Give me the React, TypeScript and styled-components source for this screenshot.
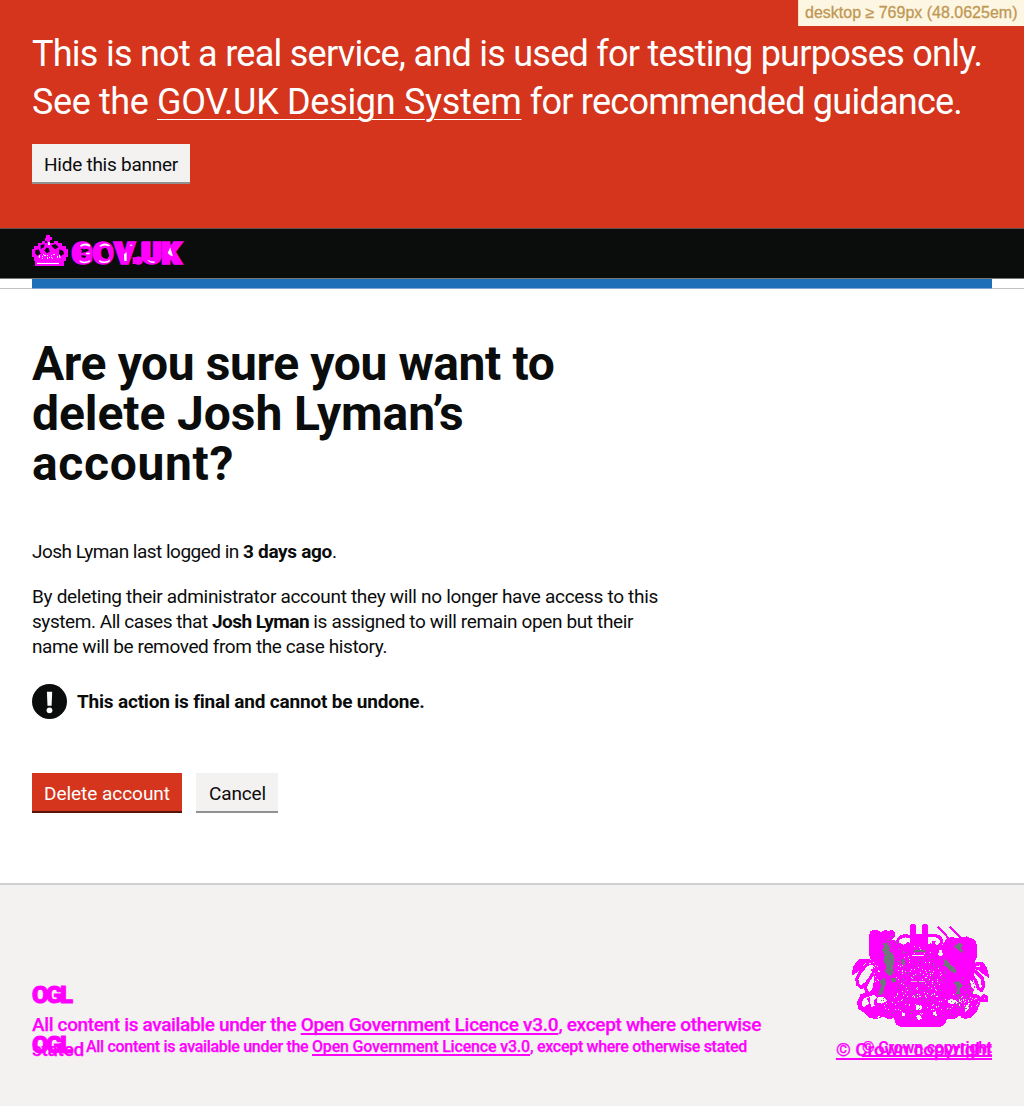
import React from "react";
import styled, { createGlobalStyle } from "styled-components";

const INK = "#0b0c0c";
const RED = "#d4351c";
const PALE = "#f3f2f1";
const MARK = "#ff00ff";
const SANS = 'Roboto, "Liberation Sans", Arial, sans-serif';

const GlobalStyle = createGlobalStyle`
  *, *::before, *::after { box-sizing: border-box; }
  body { margin: 0; background: ${PALE}; color: ${INK}; font: 19px/25px ${SANS}; }
  h1, p { margin: 0; }
`;

const Page = styled.div`
  display: flex;
  flex-direction: column;
  min-height: 1106px;
`;

const Run = styled.span<{ $track: number }>`
  letter-spacing: ${(p) => p.$track}px;
  white-space: pre;
`;

const Line = styled(Run)`
  display: block;
`;

const Strong = styled(Run)`
  font-weight: 700;
`;

const Banner = styled.div`
  height: 228px;
  padding: 30px 32px 0;
  background: ${RED};
  color: #fff;
`;

const BannerText = styled.p`
  margin-bottom: 18px;
  font-size: 36px;
  line-height: 48px;
  white-space: nowrap;
`;

const BannerLink = styled.a<{ $track: number }>`
  color: inherit;
  letter-spacing: ${(p) => p.$track}px;
  text-decoration: underline;
  text-decoration-thickness: 1px;
  text-underline-offset: 5px;
`;

const Breakpoint = styled.div`
  position: absolute;
  top: 0;
  right: 0;
  width: 226px;
  height: 26px;
  padding-left: 6px;
  border-left: 1px solid #f4e3c0;
  background: #fdf6e3;
  color: #c09853;
  font: 16px/25px "Liberation Sans", Arial, sans-serif;
  white-space: nowrap;
  -webkit-text-stroke: 0.3px #c09853;
`;

const tones = {
  grey: { bg: PALE, fg: INK, shadow: "#929191" },
  red: { bg: RED, fg: "#fff", shadow: "#55150b" },
};

const Button = styled.button<{ $tone: "grey" | "red"; $width: number; $track: number; $inset?: number }>`
  width: ${(p) => p.$width}px;
  height: 40px;
  padding: 2px 0 0 ${(p) => p.$inset ?? 12}px;
  border: 0;
  border-bottom: 2px solid ${(p) => tones[p.$tone].shadow};
  background: ${(p) => tones[p.$tone].bg};
  color: ${(p) => tones[p.$tone].fg};
  font: 19px/19px ${SANS};
  letter-spacing: ${(p) => p.$track}px;
  text-align: left;
  white-space: nowrap;
  display: block;
`;

const Header = styled.header`
  height: 51px;
  padding: 4px 32px 0;
  border-top: 1px solid #60514e;
  border-bottom: 1px solid #777;
  background: ${INK};
  svg { display: block; }
`;

const BlueStrip = styled.div`
  height: 10px;
  padding: 0 32px;
  border-bottom: 1px solid #c3c3c3;
  background: #fff;
  &::before {
    content: "";
    display: block;
    height: 9px;
    background: #1d70b8;
    box-shadow: 0 1px #79a5cf;
  }
`;

const Main = styled.main`
  height: 594px;
  padding: 50px 32px 0;
  background: #fff;
`;

const Title = styled.h1`
  margin-bottom: 50px;
  font-size: 48px;
  line-height: 50px;
`;

const Paragraph = styled.p`
  margin-bottom: 20px;
`;

const Warning = styled.div`
  display: flex;
  align-items: center;
  gap: 10px;
  height: 36px;
  margin: 24px 0 54px;
`;

const Actions = styled.div`
  display: flex;
  gap: 14px;
`;

const Footer = styled.footer`
  flex: 1;
  display: flex;
  justify-content: space-between;
  align-items: flex-start;
  padding: 39px 32px 0;
  border-top: 2px solid #cfcfcf;
  color: ${MARK};
  font-weight: 500;
  -webkit-text-stroke: 0.25px ${MARK};
`;

const Licence = styled.div`
  display: grid;
  width: 740px;
  padding-top: 57px;
  > * { grid-area: 1 / 1; }
`;

const Ogl = styled.span`
  font-size: 24px;
  line-height: 28px;
  font-weight: 900;
  letter-spacing: -2.5px;
  width: 54px;
  -webkit-text-stroke: 1px ${MARK};
`;

const LargeLicence = styled.div`
  display: flex;
  flex-direction: column;
  gap: 3px;
`;

const SmallLicence = styled.div`
  display: flex;
  align-items: flex-start;
  margin-top: 50px;
  font-size: 16px;
  line-height: 20px;
`;

const SmallText = styled.div`
  padding-top: 6px;
`;

const FooterLink = styled.a<{ $track: number; $drop?: number }>`
  color: inherit;
  letter-spacing: ${(p) => p.$track}px;
  text-decoration: underline;
  text-decoration-thickness: 2px;
  text-decoration-skip-ink: none;
  text-underline-offset: ${(p) => p.$drop ?? 2}px;
  white-space: pre;
`;

const Crest = styled.div`
  display: flex;
  flex-direction: column;
  align-items: flex-end;
  width: 160px;
  > svg { display: block; margin-right: 2px; }
`;

const Copyright = styled.div`
  display: grid;
  justify-items: end;
  margin-top: 9px;
  > * { grid-area: 1 / 1; }
`;

const SmallCopyright = styled(FooterLink)`
  padding-top: 1px;
  font-size: 16px;
  line-height: 20px;
`;

const specks = (n: number, cx: number, cy: number, rx: number, ry: number, seed: number) => {
  let s = seed;
  const next = () => {
    s = (s * 16807) % 2147483647;
    return s / 2147483647;
  };
  return Array.from({ length: n }, () => {
    const a = next() * Math.PI * 2;
    const r = Math.sqrt(next());
    const x = Math.round((cx + Math.cos(a) * r * rx) / 3) * 3;
    const y = Math.round((cy + Math.sin(a) * r * ry) / 3) * 3;
    return `M${x} ${y}h3v3h-3z`;
  }).join("");
};

const Logo = () => (
  <svg width="160" height="44" viewBox="96 39 480 132" aria-label="GOV.UK">
    <g fill={MARK} shapeRendering="crispEdges">
      <path d="M138 45h12v7h6v9h-6v7h12v-5h12v6h13v8h10v9h7v24h-6v12h-6v15H106v-15h-5v-12h-5V86h6v-9h11v-8h14v-6h9v6h6v-7h-8v-9h4z" />
    </g>
    <g fill={INK}>
      <path d="M122 75l12-2-2 9-10 5zM154 76l12-4 10 9-10 7-8-6zM106 91l10-3 6 13-10 6-7-7zM178 88l12 5 2 8-9 7-6-7zM133 92l6-9 7 1 3 11-8 5z" />
    </g>
    <path d={specks(22, 150, 108, 38, 7, 71)} fill="#eee" />
    <path d="M111 128h66v4h-66zM144 67h6v8h-6zM116 109h4v4h-4zM177 110h5v3h-5z" fill="#fff" />
    <path d="M117 126h60v2h-60z" fill={MARK} />
    <text
      x="217 280 346 402 427 486"
      y="129"
      fontFamily={SANS}
      fontSize="85"
      fontWeight="900"
      fill={MARK}
      stroke={MARK}
      strokeWidth="11"
    >
      GOV.UK
    </text>
    <path d="M398 112h26v20h-26zM424 66h18v56h-18z" fill={MARK} />
    <g fill="#fff">
      <path d="M240 76q15-10 31-1l-3 5q-15-7-25 1zM239 121q15 9 32-1l-2 6q-17 7-30 0zM298 78q16-14 33-1l-5 2q-12-6-24 1zM298 120q18 10 32-2l-2 8q-17 6-30 0zM372 103l8-7v27h-7zM503 99l8-17 4 15 4 12-9-3zM443 120q10 5 23 5l-4 4q-12 0-19-7zM258 98h11v5h-11zM390 74h7v3h-7z" />
    </g>
    <path d="M308 88q7-8 14 0l6 20-7 9-11-3-5-14zM246 91l13-5 9 4-10 6-14 3zM243 106l16 1-4 7-9-2z" fill={INK} />
  </svg>
);

const Alert = () => (
  <svg width="35" height="35" viewBox="0 0 35 35" aria-label="Warning">
    <circle cx="17.5" cy="17.5" r="17.5" fill={INK} />
    <path d="M14.9 7.7h5.3l-.6 14h-4.1z" fill="#fff" />
    <circle cx="17.5" cy="26.3" r="2.9" fill="#fff" />
  </svg>
);

const CoatOfArms = () => (
  <svg width="138" height="104" viewBox="66 40 414 312" shapeRendering="crispEdges" aria-label="Coat of arms">
    <g fill={MARK}>
      <path d="M116 76l5-14 11-5 13 3 8 5 11-7 12 3 10-4 10 8-2 14-8 8 15 4 20 12 12-9 7 2V45l5-4h8l5 5v24h18V45l5-4h8l6 4v55l8-3 12 14 22-8 11-17 16-8 14 4 20-3 12-2 24 10 8 17v31l-8 20 2 25-8 26 7 26-7 16 22 7 1 20-10 28-16 17-20 5-20-7-14 7-20-1-5 14-14 11-14 1H217l-18-8-8-19-17 2-14-7-22 8-19-5-17-14 2-20 19-9 6-17-13-10 12-20 5-28-9-22 2-25-8-21z" />
    </g>
    <g fill="none" stroke={MARK} strokeWidth="10">
      <path d="M134 157l-22-8-25 15 2 10-18 12 3-16 13-18 13-3 19 2M145 180l-32-21-21 23-12 23 4 17 10 8 15-12 16-24 22-19M116 210l-11 18 7 19" />
      <path d="M126 248l-29 8-8 18 1 15 14 10 14-7 8-16-11-15" strokeWidth="14" />
      <path d="M203 92l7-12 16-5 20 4M286 75l28-1 16 6 5 12-4 12-13 5-8-10 2-8" />
      <path d="M398 160l16-3 7 18 19 11 18 18 2 24-6 11-9-6-9-25-18-22M430 176l7-15 17-3 12 14 5 20-13-8-8-11-12 2M414 255l24 0 9 17-9 19-12 15-16 9M436 270l20-2 12 2 1-10-6-4-6 6 3 12" />
    </g>
    <path d="M323 49l26 26 9 16M359 49l34 34" fill="none" stroke={MARK} strokeWidth="6" />
    <path d="M75 180l12-21 13-5 4 6-12 14zM448 159l14 3 10 16 2 13-14-4-10-14z" fill={MARK} />
    <g fill={PALE}>
      <path d="M207 91l6-7 11-3 7 5v9l-9-1-6 5zM300 84h8l-3 8-6 4zM112 167l12-5 10 5-12 10-18 10zM326 119h9l4 12-6 7-8-5zM121 257l12-5 7 9-8 10 2 14-9 4-5-15zM403 291l16-13-4 19-9 8zM258 284h15l3 8-6 6h-12zM257 316l13-4 6 12-11 5zM143 259l18 1 12 10-18 9-14-3zM353 268l15-3 13 8-15 8-11-5zM217 305l9 3-3 9-7 1zM308 304l9-2 5 13-10 3zM420 207l10 10 4 18-8-2-6-16zM144 314l8 5-10 3zM384 314l9 4-10 3z" />
      <path d={specks(80, 266, 185, 70, 84, 17)} />
      <path d={specks(75, 270, 270, 125, 40, 37)} />
      <path d={specks(40, 410, 270, 35, 20, 61)} />
      <path d={specks(20, 130, 185, 20, 40, 99)} />
      <path d="M247 134h36v3h-36z" />
    </g>
    <g fill="#6f777b">
      <path d="M157 97h14l9 13-2 12 11 8 5 24-6 17 2 17-11 9-14-15 4-15-9-16 4-16-8-18 8-8zM149 210l15-9 5 18-7 11-3 20-14 3 2-13 7-13zM183 201h14v12h-12zM370 107l20-11 9 10-7 6 7 8-3 8-16-14zM340 145l13 5 9 13 14 8 2 16-14-2-12-14-9-6zM372 216l13-6 14 14-8 10-2 18-10-2 2-18zM217 144l9 5-1 17-8-5zM251 118h34v7h-34z" />
      <path d={specks(115, 266, 195, 80, 82, 1017)} />
      <path d={specks(80, 265, 285, 130, 43, 2317)} />
      <path d={specks(45, 190, 120, 34, 46, 333)} />
      <path d={specks(40, 400, 250, 30, 55, 541)} />
    </g>
    <path d="M242 213h42" stroke="#bfc1c3" strokeWidth="3" strokeDasharray="18 6" />
  </svg>
);

export default function App() {
  return (
    <>
      <GlobalStyle />
      <Page>
        <Breakpoint>desktop ≥ 769px (48.0625em)</Breakpoint>
        <Banner>
          <BannerText>
            <Line $track={-0.736}>This is not a real service, and is used for testing purposes only.</Line>
            <Run $track={-0.389}>See the </Run>
            <BannerLink $track={-0.311}>GOV.UK Design System</BannerLink>
            <Run $track={-0.755}> for recommended guidance.</Run>
          </BannerText>
          <Button $tone="grey" $width={158} $track={-0.25}>Hide this banner</Button>
        </Banner>
        <Header>
          <Logo />
        </Header>
        <BlueStrip />
        <Main>
          <Title>
            <Line $track={-0.4}>Are you sure you want to</Line>
            <Line $track={-0.08}>delete Josh Lyman’s</Line>
            <Line $track={0.661}>account?</Line>
          </Title>
          <Paragraph>
            <Run $track={-0.512}>Josh Lyman last logged in </Run>
            <Strong $track={-0.314}>3 days ago</Strong>.
          </Paragraph>
          <Paragraph>
            <Line $track={-0.304}>By deleting their administrator account they will no longer have access to this</Line>
            <Run $track={-0.446}>system. All cases that </Run>
            <Strong $track={-0.541}>Josh Lyman</Strong>
            <Run $track={-0.365}> is assigned to will remain open but their</Run>
            <Line $track={-0.387}>name will be removed from the case history.</Line>
          </Paragraph>
          <Warning>
            <Alert />
            <Strong $track={-0.195}>This action is final and cannot be undone.</Strong>
          </Warning>
          <Actions>
            <Button $tone="red" $width={150} $track={-0.035}>Delete account</Button>
            <Button $tone="grey" $width={82} $track={-0.139} $inset={13}>Cancel</Button>
          </Actions>
        </Main>
        <Footer>
          <Licence>
            <LargeLicence>
              <Ogl>OGL</Ogl>
              <div>
                <Run $track={-0.352}>All content is available under the </Run>
                <FooterLink $track={-0.255}>Open Government Licence v3.0</FooterLink>
                <Run $track={-0.311}>, except where otherwise</Run>
                <Line $track={-0.26}>stated</Line>
              </div>
            </LargeLicence>
            <SmallLicence>
              <Ogl>OGL</Ogl>
              <SmallText>
                <Run $track={-0.303}>All content is available under the </Run>
                <FooterLink $track={-0.18}>Open Government Licence v3.0</FooterLink>
                <Run $track={-0.294}>, except where otherwise stated</Run>
              </SmallText>
            </SmallLicence>
          </Licence>
          <Crest>
            <CoatOfArms />
            <Copyright>
              <FooterLink $track={-0.147}>© Crown copyright</FooterLink>
              <SmallCopyright $track={-0.205}>© Crown copyright</SmallCopyright>
            </Copyright>
          </Crest>
        </Footer>
      </Page>
    </>
  );
}
